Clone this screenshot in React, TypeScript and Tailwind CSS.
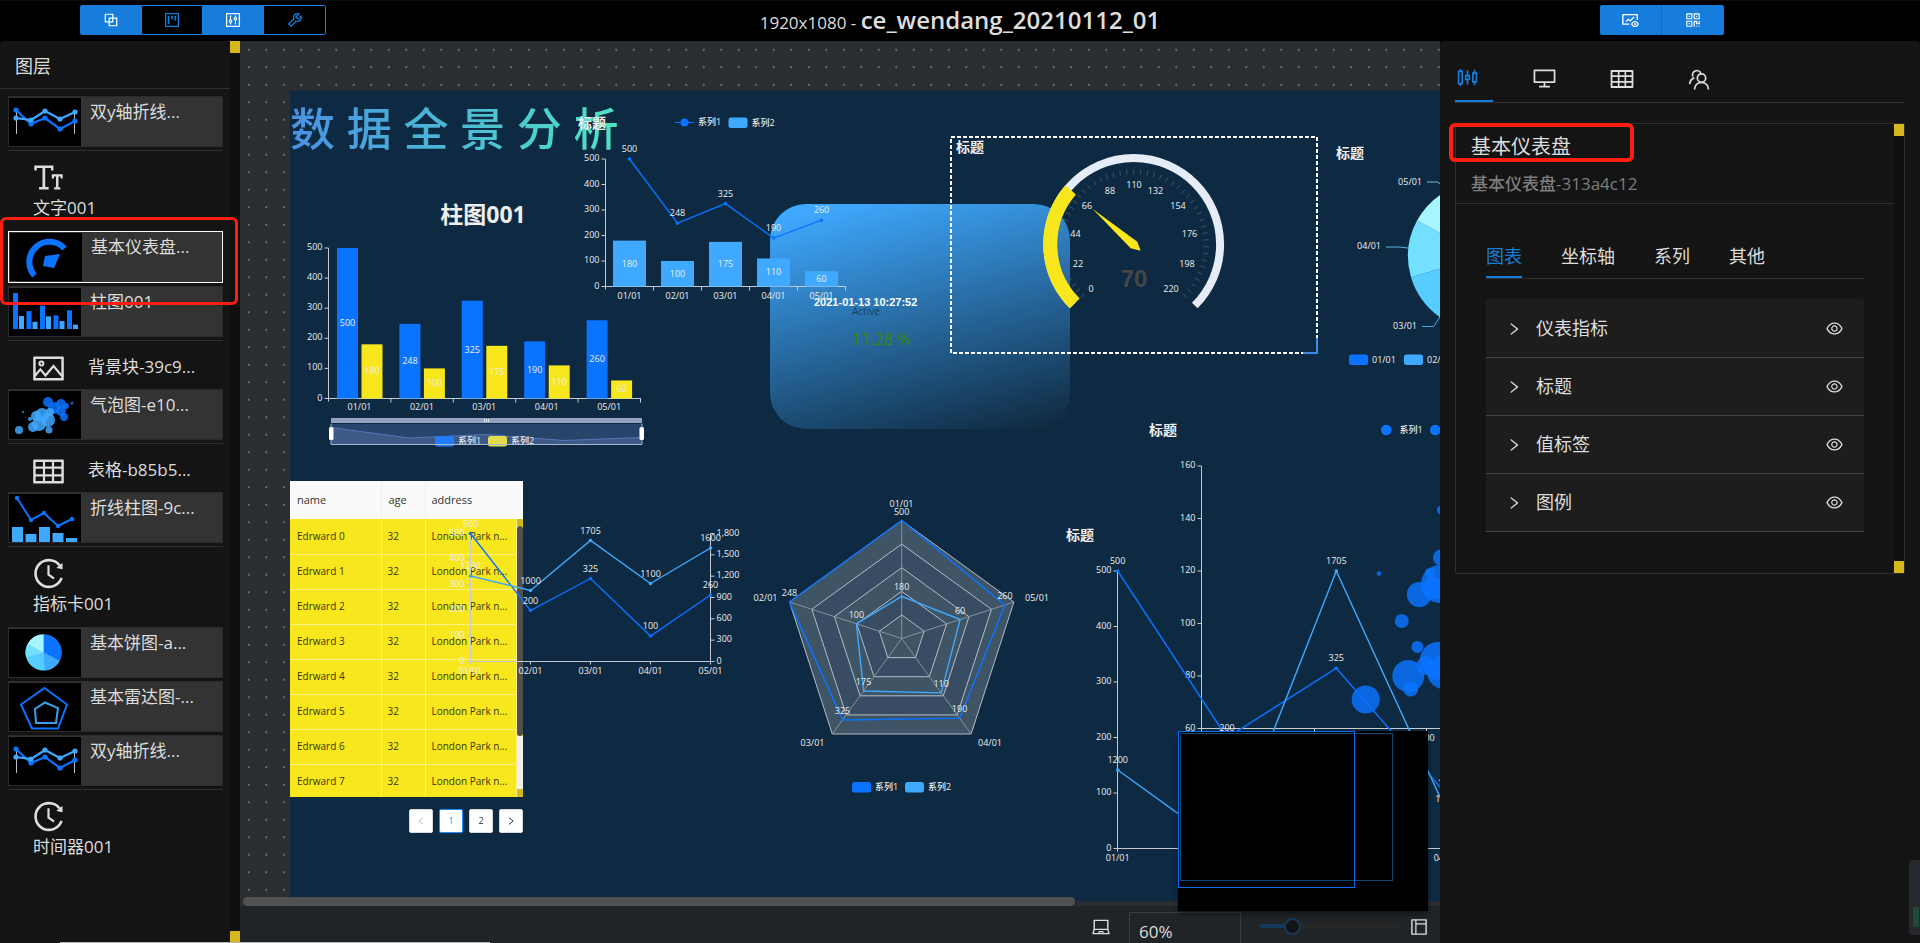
import type { ReactNode } from "react";
import {
  AiOutlineBlock,
  AiOutlineProject,
  AiOutlineControl,
  AiOutlineTool,
  AiOutlineFundView,
  AiOutlineQrcode,
  AiOutlineFontSize,
  AiOutlinePicture,
  AiOutlineTable,
  AiOutlineHistory,
  AiOutlineDesktop,
  AiOutlineEye,
  AiOutlineRight,
  AiOutlineLeft,
  AiOutlineLaptop,
  AiOutlineLayout,
  AiOutlineSliders,
} from "react-icons/ai";

const BLUE = "#0a73ff";
const SKY = "#3fa9ff";
const YELLOW = "#f8e71c";
const AXIS = "#c3cad1";
const LABEL = "#eeeeee";
const CATEGORIES = ["01/01", "02/01", "03/01", "04/01", "05/01"];
const SERIES_A = [500, 248, 325, 190, 260];
const SERIES_B = [180, 100, 175, 110, 60];

type Point = [number, number];
const join = (points: Point[]) => points.map((p) => p.join(",")).join(" ");

/* ---------- chart primitives ---------- */

function Label({ x, y, children, anchor = "middle" }: { x: number; y: number; children: ReactNode; anchor?: "start" | "middle" | "end" }) {
  return (
    <text x={x} y={y + 3} textAnchor={anchor} fontSize={9} fontWeight={500} fill={LABEL}>
      {children}
    </text>
  );
}

function Title({ x, y, size = 14, anchor = "start", children = "标题" }: { x: number; y: number; size?: number; anchor?: "start" | "middle"; children?: ReactNode }) {
  return (
    <text x={x} y={y + Math.round(size * 0.36)} textAnchor={anchor} fontSize={size} fontWeight={700} fill={LABEL}>
      {children}
    </text>
  );
}

function Swatch({ x, y, color, text }: { x: number; y: number; color: string; text: string }) {
  return (
    <g>
      <rect x={x} y={y - 5} width={19} height={10.5} rx={2.5} fill={color} />
      <Label x={x + 23} y={y} anchor="start">
        {text}
      </Label>
    </g>
  );
}

function YAxis({ x, top, bottom, labels, right = false }: { x: number; top: number; bottom: number; labels: string[]; right?: boolean }) {
  const step = (bottom - top) / (labels.length - 1);
  return (
    <g>
      <path d={`M${x} ${top}V${bottom + 3}`} stroke={AXIS} />
      {labels.map((label, i) => {
        const y = bottom - i * step;
        return (
          <g key={label}>
            <path d={right ? `M${x} ${y}h4` : `M${x} ${y}h-4`} stroke={AXIS} />
            <Label x={right ? x + 6 : x - 6} y={y - 1} anchor={right ? "start" : "end"}>
              {label}
            </Label>
          </g>
        );
      })}
    </g>
  );
}

function Line({ points, color, labels }: { points: Point[]; color: string; labels: (string | number)[] }) {
  return (
    <g>
      <polyline points={join(points)} fill="none" stroke={color} strokeWidth={1.4} />
      {points.map(([x, y], i) => (
        <g key={x}>
          <circle cx={x} cy={y} r={1.8} fill={color} />
          <Label x={x} y={y - 10}>
            {labels[i]}
          </Label>
        </g>
      ))}
    </g>
  );
}

const HUNDREDS = ["0", "100", "200", "300", "400", "500"];

/* ---------- widgets on the board ---------- */

function BarChart() {
  const base = 398.5;
  const k = 150.5 / 500;
  const pitch = 62.4;
  const overview: Point[] = [[331, 427.5], [409, 438], [486, 434.5], [564, 440.5], [641, 437.5]];
  return (
    <svg viewBox="290 190 370 270" className="absolute left-0 top-[99px] h-[270px] w-[370px]">
      <Title x={483} y={215} size={23} anchor="middle">
        柱图001
      </Title>
      <YAxis x={328.5} top={248} bottom={base} labels={HUNDREDS} />
      <path d={`M328.5 ${base}H641`} stroke={AXIS} />
      {[1, 2, 3, 4, 5].map((i) => (
        <path key={i} d={`M${328.5 + i * pitch} ${base}v4`} stroke={AXIS} />
      ))}
      {CATEGORIES.map((c, i) => (
        <g key={c}>
          <rect x={337 + i * pitch} y={base - SERIES_A[i] * k} width={21} height={SERIES_A[i] * k} fill={BLUE} />
          <rect x={361.5 + i * pitch} y={base - SERIES_B[i] * k} width={21} height={SERIES_B[i] * k} fill={YELLOW} />
          <Label x={347.5 + i * pitch} y={base - (SERIES_A[i] * k) / 2}>
            {SERIES_A[i]}
          </Label>
          <Label x={372 + i * pitch} y={base - (SERIES_B[i] * k) / 2}>
            {SERIES_B[i]}
          </Label>
          <Label x={359.5 + i * pitch} y={407}>
            {c}
          </Label>
        </g>
      ))}
      <rect x={331} y={424} width={311} height={21} fill="#27456b" />
      <polygon points={`${join(overview)} 641,444.5 331,444.5`} fill="#3d5a87" />
      <polyline points={join(overview)} fill="none" stroke="#5576bb" />
      <Swatch x={435} y={441} color="#227cfb" text="系列1" />
      <Swatch x={488} y={441} color="#e2dc4c" text="系列2" />
      <path d="M331 423.5V444.5H642V423.5" fill="none" stroke="#a7b7cc" />
      <rect x={331} y={418} width={311} height={5} fill="#94a3bf" />
      <path d="M484.500 419v3M486.500 419v3M488.500 419v3" stroke="#ffffff" strokeWidth={0.8} />
      <rect x={329} y={427} width={4.500} height={13} rx={1.5} fill="#ffffff" />
      <rect x={639.500} y={427} width={4.500} height={13} rx={1.5} fill="#ffffff" />
    </svg>
  );
}

function LineBarChart() {
  const base = 286.5;
  const k = 127.5 / 500;
  const pitch = 48;
  const center = (i: number) => 629.5 + i * pitch;
  return (
    <svg viewBox="570 105 290 205" className="absolute left-[280px] top-[14px] h-[205px] w-[290px]">
      <Title x={578} y={123} />
      <path d="M675 122.500H694" stroke={BLUE} />
      <circle cx={684.5} cy={122.5} r={4} fill={BLUE} />
      <Label x={698} y={122} anchor="start">
        系列1
      </Label>
      <Swatch x={728.5} y={122.5} color={SKY} text="系列2" />
      <YAxis x={605.5} top={159} bottom={base} labels={HUNDREDS} />
      <path d={`M605.500 ${base}H846`} stroke={AXIS} />
      {[1, 2, 3, 4, 5].map((i) => (
        <path key={i} d={`M${605.5 + i * pitch} ${base}v4`} stroke={AXIS} />
      ))}
      {CATEGORIES.map((c, i) => (
        <g key={c}>
          <rect x={center(i) - 16.5} y={base - SERIES_B[i] * k} width={33} height={SERIES_B[i] * k} fill={SKY} />
          <Label x={center(i)} y={base - (SERIES_B[i] * k) / 2}>
            {SERIES_B[i]}
          </Label>
          <Label x={center(i)} y={295.5}>
            {c}
          </Label>
        </g>
      ))}
      <Line points={SERIES_A.map((v, i): Point => [center(i), base - v * k])} color={BLUE} labels={SERIES_A} />
    </svg>
  );
}

function Gauge() {
  const cx = 1133.7;
  const cy = 244.4;
  const polar = (deg: number, r: number): Point => {
    const a = (deg * Math.PI) / 180;
    return [cx + r * Math.cos(a), cy - r * Math.sin(a)];
  };
  const arc = (from: number, to: number, r: number) => {
    const large = from - to > 180 ? 1 : 0;
    return `M${polar(from, r).join(" ")}A${r} ${r} 0 ${large} 1 ${polar(to, r).join(" ")}`;
  };
  const marks: [number, number, number][] = [
    [0, 1091, 289], [22, 1078, 264], [44, 1075.5, 234], [66, 1087, 206], [88, 1110, 191], [110, 1134, 184.5],
    [132, 1155.5, 191], [154, 1178, 206], [176, 1189.5, 234], [198, 1187, 264], [220, 1171, 289],
  ];
  return (
    <div className="absolute left-[660px] top-[45px] h-[218px] w-[368px]">
      <svg viewBox="950 136 368 218" className="h-full w-full">
        <rect x={951} y={137} width={366} height={216} fill="none" stroke="#ffffff" strokeWidth={2} strokeDasharray="4 2" />
        <path d="M1303 353H1317V338" fill="none" stroke="#3b8cf0" strokeWidth={2} />
        <Title x={956} y={147} />
        <path d={arc(225, -45, 86.4)} fill="none" stroke="#e6ebf8" strokeWidth={8} />
        <path d={arc(225, 139.1, 83.4)} fill="none" stroke={YELLOW} strokeWidth={14} />
        {Array.from({ length: 51 }, (_, i) => {
          const deg = 225 - i * 5.4;
          return <path key={i} d={`M${polar(deg, 75).join(" ")}L${polar(deg, 70).join(" ")}`} stroke="#63677f" strokeOpacity={0.8} strokeWidth={0.8} />;
        })}
        {marks.map(([value, x, y]) => (
          <Label key={value} x={x} y={y}>
            {value}
          </Label>
        ))}
        <polygon points="1092.700,209 1137.300,241.700 1140.700,250.700 1130.700,248.300" fill={YELLOW} />
        <text x={1134} y={287} textAnchor="middle" fontSize={24} fontWeight={700} fill="#464646" fontFamily="Liberation Sans, sans-serif">
          70
        </text>
      </svg>
    </div>
  );
}

function PieChart() {
  const cx = 1482.5;
  const cy = 256.2;
  const r = 74.5;
  const colors = [BLUE, SKY, "#57ccff", "#73e0ff", "#a6f5ff"];
  const total = SERIES_A.reduce((sum, v) => sum + v, 0);
  let acc = 0;
  const slices = SERIES_A.map((v, i) => {
    const from = (acc / total) * 2 * Math.PI;
    acc += v;
    const to = (acc / total) * 2 * Math.PI;
    const d = `M${cx} ${cy}L${cx + r * Math.sin(from)} ${cy - r * Math.cos(from)}A${r} ${r} 0 0 1 ${cx + r * Math.sin(to)} ${cy - r * Math.cos(to)}Z`;
    return <path key={v} d={d} fill={colors[i]} />;
  });
  return (
    <svg viewBox="1330 140 240 235" className="absolute left-[1040px] top-[49px] h-[235px] w-[240px]">
      <Title x={1336} y={153} />
      {slices}
      <path d="M1427 182H1438L1442 186" fill="none" stroke="#6bbfcb" />
      <path d="M1386 247H1399L1408 248" fill="none" stroke="#55b4dd" />
      <path d="M1422 326.500H1433.500L1440 317" fill="none" stroke="#46acdc" />
      <Label x={1422} y={181.5} anchor="end">05/01</Label>
      <Label x={1381} y={246} anchor="end">04/01</Label>
      <Label x={1417} y={326} anchor="end">03/01</Label>
      <Swatch x={1349} y={359.5} color={BLUE} text="01/01" />
      <Swatch x={1404} y={359.5} color={SKY} text="02/01" />
    </svg>
  );
}

function RadarChart() {
  const cx = 901.7;
  const cy = 638.5;
  const R = 118;
  const at = (i: number, ratio: number): Point => {
    const a = (-i * 2 * Math.PI) / 5;
    return [Math.round((cx + R * ratio * Math.sin(a)) * 10) / 10, Math.round((cy - R * ratio * Math.cos(a)) * 10) / 10];
  };
  const ring = (ratio: number) => join([0, 1, 2, 3, 4].map((i) => at(i, ratio)));
  const outer = [1, 1, 0.853, 0.835, 0.92].map((v, i) => at(i, v));
  const inner = [0.358, 0.404, 0.55, 0.57, 0.52].map((v, i) => at(i, v));
  const names: Point[] = [[901.5, 503.5], [765.5, 597.5], [812.5, 742.5], [990, 742.5], [1037, 597.5]];
  return (
    <svg viewBox="750 490 310 310" className="absolute left-[460px] top-[399px] h-[310px] w-[310px]">
      {[1, 0.8, 0.6, 0.4, 0.2].map((ratio, i) => (
        <polygon key={ratio} points={ring(ratio)} fill={i % 2 ? "#384d64" : "#3f5464"} stroke="#c2cad4" strokeWidth={0.9} />
      ))}
      {[0, 1, 2, 3, 4].map((i) => (
        <path key={i} d={`M${cx} ${cy}L${at(i, 1).join(" ")}`} stroke="#8f9aa2" strokeWidth={0.9} />
      ))}
      <polygon points={join(outer)} fill="none" stroke={BLUE} strokeWidth={1.5} />
      <polygon points={join(inner)} fill="none" stroke={SKY} strokeWidth={1.4} />
      {outer.map(([x, y], i) => (
        <Label key={i} x={x} y={y - 9}>{SERIES_A[i]}</Label>
      ))}
      {inner.map(([x, y], i) => (
        <Label key={i} x={x} y={y - 9}>{SERIES_B[i]}</Label>
      ))}
      {names.map(([x, y], i) => (
        <Label key={i} x={x} y={y}>{CATEGORIES[i]}</Label>
      ))}
      <Swatch x={852} y={787} color={BLUE} text="系列1" />
      <Swatch x={905} y={787} color={SKY} text="系列2" />
    </svg>
  );
}

function DualAxisChart() {
  const low: Point[] = [[470.5, 533.5], [530.5, 610.5], [590.5, 578.5], [650.5, 636], [710.5, 595]];
  const high: Point[] = [[470.5, 576], [530.5, 590.5], [590.5, 540.5], [650.5, 583.5], [710.5, 548]];
  return (
    <svg viewBox="435 510 320 175" className="pointer-events-none absolute left-[145px] top-[419px] h-[175px] w-[320px]">
      <YAxis x={470.5} top={533.5} bottom={661.5} labels={HUNDREDS} />
      <YAxis x={710.5} top={533.5} bottom={661.5} labels={["0", "300", "600", "900", "1,200", "1,500", "1,800"]} right />
      <path d="M470.500 661.500H710.500M530.500 661.500v3M590.500 661.500v3M650.500 661.500v3" stroke={AXIS} />
      {CATEGORIES.map((c, i) => (
        <Label key={c} x={470.5 + i * 60} y={671}>{c}</Label>
      ))}
      <Line points={low} color={BLUE} labels={[500, 200, 325, 100, 260]} />
      <Line points={high} color={SKY} labels={[1200, 1000, 1705, 1100, 1600]} />
    </svg>
  );
}

function BubbleChart() {
  const bubbles: [number, number, number][] = [
    [1379, 573.5, 2.3], [1401.7, 621, 7], [1419.3, 594.6, 12.5], [1440, 584, 19], [1434, 588, 11], [1441, 557.5, 8],
    [1441.5, 510, 4.5], [1430, 573, 5], [1417.3, 647, 6], [1408.3, 676, 16], [1410.7, 689, 7.5], [1426, 665.6, 9.5],
    [1438, 660, 18], [1444, 672, 17], [1436, 670, 10], [1365.7, 699.5, 14],
  ];
  return (
    <svg viewBox="1145 415 400 335" className="absolute left-[855px] top-[324px] h-[335px] w-[400px]">
      <Title x={1149} y={430} />
      <circle cx={1386.3} cy={430} r={5.3} fill={BLUE} />
      <Label x={1399.5} y={429.5} anchor="start">系列1</Label>
      <circle cx={1435.3} cy={430} r={5.3} fill={BLUE} />
      <YAxis x={1201.5} top={466} bottom={728.5} labels={["60", "80", "100", "120", "140", "160"]} />
      <path d="M1201.500 728.500H1540M1314.500 728.500v4M1426.500 728.500v4" stroke={AXIS} />
      <Label x={1427} y={738}>100</Label>
      {bubbles.map(([x, y, r]) => (
        <circle key={`${x}-${y}`} cx={x} cy={y} r={r} fill={BLUE} fillOpacity={0.84} />
      ))}
    </svg>
  );
}

function TrendChart() {
  const x = (i: number) => 1117.7 + i * 109.3;
  const low = [500, 200, 325, 100].map((v, i): Point => [x(i), 848.8 - v * 0.5556]);
  const high = [1200, 1000, 1705, 1100].map((v, i): Point => [x(i), 848.8 - (v - 1000) * 0.394]);
  return (
    <svg viewBox="1060 520 480 350" className="absolute left-[770px] top-[429px] h-[350px] w-[480px]">
      <Title x={1066} y={535} />
      <YAxis x={1117.5} top={571} bottom={848.5} labels={HUNDREDS} />
      <path d="M1117.500 848.500H1540" stroke={AXIS} />
      {[0, 1, 2, 3].map((i) => (
        <Label key={i} x={x(i)} y={858}>{CATEGORIES[i]}</Label>
      ))}
      <Line points={low} color={BLUE} labels={[500, 200, 325, 100]} />
      <Line points={high} color={SKY} labels={[1200, 1000, 1705, 1100]} />
    </svg>
  );
}

function DataTable() {
  return (
    <div className="absolute left-0 top-[390px] w-[233px]">
      <div className="relative h-[316px] overflow-hidden bg-[#f8e71c]">
        <table className="w-full table-fixed border-collapse text-left">
          <colgroup>
            <col className="w-[91px]" />
            <col className="w-[44px]" />
            <col className="w-[91px]" />
            <col />
          </colgroup>
          <thead>
            <tr className="h-[38px] bg-[#fafafa] text-[11px] text-[#333333]">
              <th className="border-r border-[#f0f0f0] pl-[7px] font-normal">name</th>
              <th className="border-r border-[#f0f0f0] pl-[7px] font-normal">age</th>
              <th className="pl-[6px] font-normal" colSpan={2}>address</th>
            </tr>
          </thead>
          <tbody>
            {[0, 1, 2, 3, 4, 5, 6, 7].map((n) => (
              <tr key={n} className="h-[35px] border-b border-[#faf08a] text-[10px] text-[#3a3608]">
                <td className="border-r border-[#faf08a] pl-[7px]">Edrward {n}</td>
                <td className="border-r border-[#faf08a] pl-[6px]">32</td>
                <td className="whitespace-nowrap border-r border-[#faf08a] pl-[6px]">London Park n...</td>
                <td />
              </tr>
            ))}
          </tbody>
        </table>
        <div className="absolute bottom-0 right-0 top-[38px] flex w-[6px] flex-col">
          <span className="h-[7px] bg-[#d4b81e]" />
          <span className="h-[210px] rounded-full bg-[#505050]" />
          <span className="flex-1 bg-[#f0f0f0]" />
          <span className="h-[8px] bg-[#d4b81e]" />
        </div>
      </div>
      <nav className="mt-3 flex justify-end gap-[6px] text-[9px]" aria-label="pagination">
        <button aria-label="previous" className="flex size-6 items-center justify-center rounded-xs border border-[#d9d9d9] bg-white text-[#bfbfbf]">
          <AiOutlineLeft size={10} />
        </button>
        <button className="flex size-6 items-center justify-center rounded-xs border border-[#1890ff] bg-white text-[#1890ff]">1</button>
        <button className="flex size-6 items-center justify-center rounded-xs border border-[#d9d9d9] bg-white text-[#333333]">2</button>
        <button aria-label="next" className="flex size-6 items-center justify-center rounded-xs border border-[#d9d9d9] bg-white text-[#333333]">
          <AiOutlineRight size={10} />
        </button>
      </nav>
    </div>
  );
}

/* ---------- layer list ---------- */

function DualLineThumb() {
  const a: Point[] = [[7, 12], [22, 26], [36, 20], [51, 31], [66, 23]];
  const b: Point[] = [[7, 20], [22, 22], [36, 13], [51, 21], [66, 14]];
  return (
    <>
      <path d="M7.500 12V36M65.500 12V36" stroke="#b8bcc2" />
      {[a, b].map((points, s) => (
        <g key={s} fill={s ? SKY : BLUE}>
          <polyline points={join(points)} fill="none" stroke={s ? SKY : BLUE} strokeWidth={2.2} />
          {points.map(([x, y]) => (
            <circle key={x} cx={x} cy={y} r={2.6} />
          ))}
        </g>
      ))}
    </>
  );
}

function GaugeThumb() {
  return (
    <>
      <path d="M24.500 42.500A19 19 0 0 1 54.500 15.500" fill="none" stroke={BLUE} strokeWidth={6} />
      <polygon points="35,23 50,21 44,35 33,33" fill={BLUE} />
    </>
  );
}

function BarThumb() {
  return (
    <>
      {SERIES_A.map((v, i) => (
        <g key={v}>
          <rect x={4 + i * 13.5} y={41 - v * 0.072} width={5} height={v * 0.072} fill={BLUE} />
          <rect x={10 + i * 13.5} y={41 - SERIES_B[i] * 0.072} width={5} height={SERIES_B[i] * 0.072} fill={SKY} />
        </g>
      ))}
    </>
  );
}

function BubbleThumb() {
  const dark: [number, number, number][] = [[39, 11, 5], [52, 13, 5], [45, 17, 6], [52, 20, 5], [55, 26, 4], [63, 12, 1.5], [57, 15, 3]];
  const light: [number, number, number][] = [[10, 39, 4], [24, 36, 5], [30, 33, 7], [33, 24, 7], [39, 29, 7], [40, 39, 3.5], [27, 25, 5], [21, 28, 2], [14, 21, 1], [41, 21, 4]];
  return (
    <>
      {dark.map(([x, y, r]) => (
        <circle key={`${x}-${y}`} cx={x} cy={y} r={r} fill={BLUE} fillOpacity={0.85} />
      ))}
      {light.map(([x, y, r]) => (
        <circle key={`${x}-${y}`} cx={x} cy={y} r={r} fill={SKY} fillOpacity={0.85} />
      ))}
    </>
  );
}

function LineBarThumb() {
  const points: Point[] = [[8, 4], [22, 26], [35, 19], [49, 32], [63, 25]];
  const tops = [33, 40, 33, 39, 44];
  return (
    <>
      {tops.map((y, i) => (
        <rect key={i} x={3 + i * 13.5} y={y} width={11} height={48 - y} fill={SKY} />
      ))}
      <polyline points={join(points)} fill="none" stroke={BLUE} strokeWidth={2} />
      {points.map(([x, y]) => (
        <circle key={x} cx={x} cy={y} r={2.2} fill={BLUE} />
      ))}
    </>
  );
}

function PieThumb() {
  return (
    <>
      <circle cx={34.500} cy={23.500} r={18} fill="#57ccff" />
      <path d="M34.500 23.500V5.500A18 18 0 0 1 50.400 32Z" fill={BLUE} />
      <path d="M34.500 23.500L50.400 32A18 18 0 0 1 35.500 41.500Z" fill={SKY} />
      <path d="M34.500 23.500L17.200 28.600A18 18 0 0 1 18.700 14.900Z" fill="#73e0ff" />
      <path d="M34.500 23.500L18.700 14.900A18 18 0 0 1 34.500 5.500Z" fill="#a6f5ff" />
    </>
  );
}

function RadarThumb() {
  return (
    <g fill="none" strokeWidth={2}>
      <polygon points="35.500,5 58,21.500 49,45.500 23,45.500 12,21.500" stroke={BLUE} />
      <polygon points="36,19.500 49,25 47,40 27,40 26,26" stroke="#3a9fe8" />
    </g>
  );
}

function Thumb({ name, children, selected = false }: { name: string; children: ReactNode; selected?: boolean }) {
  return (
    <button
      className={
        selected
          ? "flex h-[52px] w-full border border-white bg-[#333333] p-px text-left"
          : "flex h-[51px] w-full border border-[#2b2b2b] bg-[#333333] pt-px text-left"
      }
    >
      <svg viewBox="0 0 72 48" className="h-12 w-[72px] shrink-0 bg-black">
        {children}
      </svg>
      <span className="ml-[9px] text-[17px] leading-7">{name}</span>
    </button>
  );
}

function Group({ children }: { children: ReactNode }) {
  return <div className="flex flex-col gap-[3px] border-b border-[#303030] pb-[3px]">{children}</div>;
}

function StackedLayer({ icon, name }: { icon: ReactNode; name: string }) {
  return (
    <button className="flex h-20 w-full flex-col items-start pl-[23px] pt-[9px] text-left">
      {icon}
      <span className="ml-[2px] text-[17px] leading-[26px]">{name}</span>
    </button>
  );
}

function InlineLayer({ icon, name }: { icon: ReactNode; name: string }) {
  return (
    <button className="flex h-12 w-full items-center pl-[23px] pt-[7px] text-left">
      {icon}
      <span className="-mt-1 ml-[22px] text-[17px] leading-7">{name}</span>
    </button>
  );
}

function LayerPanel() {
  return (
    <aside className="flex w-60 shrink-0 rounded-t-sm bg-[#141414] text-[#dddddd]">
      <div className="min-w-0 flex-1">
        <h2 className="h-12 border-b border-[#303030] pl-[15px] text-[18px] leading-[50px]">图层</h2>
        <div className="relative pl-2 pr-[7px] pt-[7px]">
          <Group>
            <Thumb name="双y轴折线..."><DualLineThumb /></Thumb>
          </Group>
          <StackedLayer icon={<AiOutlineFontSize size={35} />} name="文字001" />
          <Group>
            <Thumb name="基本仪表盘..." selected><GaugeThumb /></Thumb>
            <Thumb name="柱图001"><BarThumb /></Thumb>
          </Group>
          <InlineLayer icon={<AiOutlinePicture size={35} />} name="背景块-39c9..." />
          <Group>
            <Thumb name="气泡图-e10..."><BubbleThumb /></Thumb>
          </Group>
          <InlineLayer icon={<AiOutlineTable size={35} />} name="表格-b85b5..." />
          <Group>
            <Thumb name="折线柱图-9c..."><LineBarThumb /></Thumb>
          </Group>
          <StackedLayer icon={<AiOutlineHistory size={35} />} name="指标卡001" />
          <Group>
            <Thumb name="基本饼图-a..."><PieThumb /></Thumb>
            <Thumb name="基本雷达图-..."><RadarThumb /></Thumb>
            <Thumb name="双y轴折线..."><DualLineThumb /></Thumb>
          </Group>
          <StackedLayer icon={<AiOutlineHistory size={35} />} name="时间器001" />
          <div className="pointer-events-none absolute left-0 top-[128px] h-[88px] w-[238px] rounded-md border-[3px] border-[#ff1e10]" />
        </div>
      </div>
      <div className="flex w-[10px] flex-col justify-between bg-[#101010]">
        <span className="h-3 bg-[#d4b81e]" />
        <span className="h-3 bg-[#d4b81e]" />
      </div>
    </aside>
  );
}

/* ---------- header ---------- */

function Header() {
  return (
    <header className="grid h-[41px] shrink-0 grid-cols-3 items-start border-t border-[#0d0d0d] bg-black text-[#dddddd]">
      <div className="flex pl-20 pt-1">
        <button aria-label="layers" className="flex h-[30px] w-[62px] items-center justify-center rounded-l-xs border border-[#177ddc] bg-[#177ddc] text-white">
          <AiOutlineBlock size={18} />
        </button>
        <button aria-label="components" className="-ml-px flex h-[30px] w-[62px] items-center justify-center border border-[#177ddc] text-[#177ddc]">
          <AiOutlineProject size={18} />
        </button>
        <button aria-label="settings" className="-ml-px flex h-[30px] w-[62px] items-center justify-center border border-[#177ddc] bg-[#177ddc] text-white">
          <AiOutlineControl size={18} />
        </button>
        <button aria-label="tools" className="-ml-px flex h-[30px] w-[63px] items-center justify-center rounded-r-xs border border-[#177ddc] text-[#177ddc]">
          <AiOutlineTool size={18} />
        </button>
      </div>
      <h1 className="whitespace-nowrap text-center text-[17px] leading-[38px]">
        1920x1080 - <strong className="text-[24px] font-semibold">ce_wendang_20210112_01</strong>
      </h1>
      <div className="flex justify-end pr-[196px] pt-1">
        <button aria-label="preview" className="flex h-[30px] w-[62px] items-center justify-center rounded-l-xs border-r border-[#1268b8] bg-[#177ddc] text-white">
          <AiOutlineFundView size={19} />
        </button>
        <button aria-label="qr code" className="flex h-[30px] w-[62px] items-center justify-center rounded-r-xs bg-[#177ddc] text-white">
          <AiOutlineQrcode size={18} />
        </button>
      </div>
    </header>
  );
}

/* ---------- centre ---------- */

function Workspace() {
  return (
    <main className="relative flex min-w-0 flex-1 flex-col">
      <div className="relative flex-1 overflow-hidden bg-[#2a2d32] bg-[radial-gradient(circle,#667173_1px,transparent_1.500px)] bg-[size:17.500px_17.500px] pb-[5px] pl-[50px] pt-[50px]">
        <div className="relative h-full overflow-hidden bg-[#0e2a42]">
          <p className="absolute left-0 top-[4px] whitespace-nowrap bg-linear-to-r from-[#4a90e2] to-[#50e3c2] bg-clip-text text-[45px] font-medium leading-[68px] text-transparent">
            数 据 全 景 分 析
          </p>
          <BarChart />
          <div className="absolute left-[480px] top-[113px] h-[225px] w-[300px] rounded-[36px] bg-[linear-gradient(165deg,#3fa9ff_5%,#102b42_97%)]" />
          <p className="absolute left-[524px] top-[203px] whitespace-nowrap text-[11px] font-bold leading-4 text-white [font-family:'Liberation_Sans',sans-serif]">
            2021-01-13 10:27:52
          </p>
          <div className="absolute left-[562px] top-[212px] whitespace-nowrap">
            <p className="text-[10px] leading-4 text-[#164062]">Active</p>
            <p className="mt-2 text-[16px] leading-6 text-[#3f8600]">11.28 %</p>
          </div>
          <LineBarChart />
          <Gauge />
          <PieChart />
          <DataTable />
          <DualAxisChart />
          <RadarChart />
          <BubbleChart />
          <TrendChart />
        </div>
        <div className="absolute bottom-0 left-[3px] h-[9px] w-[832px] rounded-full bg-[#515151]" />
      </div>
      <footer className="flex h-[37px] shrink-0 items-end justify-end bg-[#212427] pr-[11px] text-[#dddddd]">
        <button aria-label="fit screen" className="mb-[6px] mr-[18px]">
          <AiOutlineLaptop size={20} />
        </button>
        <input
          aria-label="zoom"
          defaultValue="60%"
          className="h-[31px] w-28 border border-b-0 border-[#3a3d40] bg-transparent px-[9px] pt-[6px] text-[17px] outline-none"
        />
        <input
          type="range"
          aria-label="zoom slider"
          min={0}
          max={100}
          defaultValue={20}
          className="mb-[15px] ml-[18px] h-1 w-[142px] appearance-none rounded-full bg-[linear-gradient(to_right,#15395b_24%,#262626_24%)] [&::-webkit-slider-thumb]:size-[17px] [&::-webkit-slider-thumb]:appearance-none [&::-webkit-slider-thumb]:rounded-full [&::-webkit-slider-thumb]:border-2 [&::-webkit-slider-thumb]:border-[#15395b] [&::-webkit-slider-thumb]:bg-[#141414]"
        />
        <button aria-label="panel layout" className="mb-[6px] ml-2">
          <AiOutlineLayout size={20} />
        </button>
      </footer>
      <div className="absolute bottom-8 right-3 h-[180px] w-[250px] bg-black shadow-md shadow-black/40">
        <div className="absolute left-[2px] top-[2px] h-[148px] w-[213px] border border-[#17466c]" />
        <div className="absolute left-0 top-0 h-[157px] w-[177px] border border-[#0a6cf0]" />
      </div>
    </main>
  );
}

/* ---------- right panel ---------- */

function UsersIcon() {
  return (
    <svg viewBox="0 0 24 24" className="ml-px size-6" fill="none" stroke="currentColor" strokeWidth={1.700}>
      <circle cx={14.500} cy={11} r={4.200} />
      <path d="M7.500 22.500c.4-4.300 3-7 7-7s6.600 2.700 7 7" />
      <path d="M5.800 9.600a4.200 4.200 0 1 1 8-3.300" />
      <path d="M7.400 10.600C4.600 11.800 3 14 2.600 17.200" />
    </svg>
  );
}

function PropertyPanel() {
  return (
    <aside className="w-[480px] shrink-0 rounded-t-sm bg-[#141414] px-[15px] text-[#dddddd]">
      <nav className="flex h-[62px] gap-[39px] border-b border-[#303030]" aria-label="panels">
        <button aria-label="chart" className="flex w-[38px] items-center border-b-2 border-[#177ddc] pt-[14px] text-[#177ddc]">
          <AiOutlineSliders size={25} />
        </button>
        <button aria-label="screen" className="flex w-[38px] items-center pt-[14px]">
          <AiOutlineDesktop size={25} />
        </button>
        <button aria-label="data" className="flex w-[38px] items-center pt-[14px]">
          <AiOutlineTable size={26} />
        </button>
        <button aria-label="users" className="flex w-[38px] items-center pt-[14px]">
          <UsersIcon />
        </button>
      </nav>
      <section className="relative mt-5 flex h-[451px] rounded-xs border border-[#303030]">
        <div className="min-w-0 flex-1">
          <div className="h-20 border-b border-[#303030] pl-[15px]">
            <h2 className="text-[20px] leading-[45px]">基本仪表盘</h2>
            <p className="text-[17px] font-medium leading-[30px] text-[#7d7d7d]">基本仪表盘-313a4c12</p>
          </div>
          <div className="pl-[30px] pr-[30px]">
            <nav className="flex h-[75px] gap-[39px] border-b border-[#303030] pt-8 text-[18px]">
              <button className="border-b-2 border-[#177ddc] text-[#177ddc]">图表</button>
              <button className="border-b-2 border-transparent">坐标轴</button>
              <button className="border-b-2 border-transparent">系列</button>
              <button className="border-b-2 border-transparent">其他</button>
            </nav>
            <ul className="mt-5 rounded-t-sm bg-[#1d1d1d] pt-px text-[18px]">
              {["仪表指标", "标题", "值标签", "图例"].map((name) => (
                <li key={name} className="flex h-[58px] items-center border-b border-[#434343] pl-5 pr-5">
                  <button className="flex flex-1 items-center gap-[14px] text-left">
                    <AiOutlineRight size={16} />
                    {name}
                  </button>
                  <button aria-label="visibility">
                    <AiOutlineEye size={19} />
                  </button>
                </li>
              ))}
            </ul>
          </div>
        </div>
        <div className="flex w-[10px] flex-col justify-between bg-[#101010]">
          <span className="h-3 bg-[#d4b81e]" />
          <span className="h-3 bg-[#d4b81e]" />
        </div>
        <div className="pointer-events-none absolute -left-[7px] -top-px h-[39px] w-[185px] rounded-md border-4 border-[#ff1e10]" />
      </section>
    </aside>
  );
}

export default function App() {
  return (
    <div className="relative flex h-screen flex-col overflow-hidden bg-black [font-family:'Open_Sans','Noto_Sans_CJK_SC',sans-serif]">
      <Header />
      <div className="flex min-h-0 flex-1">
        <LayerPanel />
        <Workspace />
        <PropertyPanel />
      </div>
      <div className="absolute bottom-0 left-[60px] h-px w-[430px] bg-[#b5b5b5]" />
      <div className="absolute bottom-2 right-0 flex h-[75px] w-[11px] flex-col justify-end rounded-l-sm bg-[#25282c] pb-2 pl-1">
        <span className="h-5 w-[6px] bg-[#1f4a38]" />
      </div>
    </div>
  );
}
